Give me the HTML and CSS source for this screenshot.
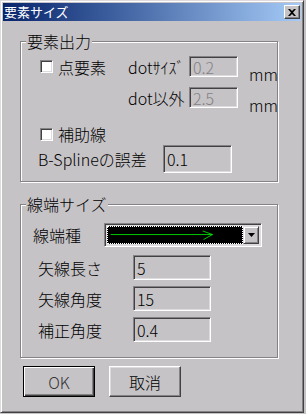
FILE: index.html
```html
<!DOCTYPE html>
<html lang="ja">
<head>
  <meta charset="UTF-8">
  <title>要素サイズ</title>
  <link rel="stylesheet" href="styles.css">
</head>
<body>
  <div class="window">
    <div class="titlebar">
      <span class="title">要素サイズ</span>
      <button class="close">
        <svg width="8" height="7" viewBox="0 0 8 7"><path d="M0 0h2l2 2 2-2h2L5 3.5 8 7H6L4 5 2 7H0l3-3.5z" fill="#000"/></svg>
      </button>
    </div>

    <div class="content">
      <fieldset class="group">
        <legend>要素出力</legend>
        <div class="rows rows-out">
          <div class="grid-dot">
            <label class="check"><span class="box"></span><span>点要素</span></label>
            <span class="lbl">dotｻｲｽﾞ</span>
            <span class="field field-dot disabled">0.2</span>
            <span class="unit">mm</span>

            <span></span>
            <span class="lbl">dot以外</span>
            <span class="field field-dot disabled">2.5</span>
            <span class="unit">mm</span>
          </div>

          <label class="check check-aux"><span class="box"></span><span>補助線</span></label>

          <div class="row row-spline">
            <span class="lbl lbl-spline">B-Splineの誤差</span>
            <span class="field field-spline">0.1</span>
          </div>
        </div>
      </fieldset>

      <fieldset class="group group-end">
        <legend>線端サイズ</legend>
        <div class="rows rows-end">
          <div class="row">
            <span class="lbl lbl-kind">線端種</span>
            <div class="combo">
              <div class="combo-value">
                <svg width="150" height="18" viewBox="0 0 150 18">
                  <path d="M3 8.5H117M106 4.5L117 8.5L107 14" stroke="#00e000" stroke-width="1" fill="none"/>
                </svg>
              </div>
              <span class="combo-btn">
                <svg width="7" height="4" viewBox="0 0 7 4"><path d="M0 0h7L3.5 4z" fill="#000"/></svg>
              </span>
            </div>
          </div>
          <div class="row row-num">
            <span class="lbl lbl-num">矢線長さ</span>
            <span class="field field-num">5</span>
          </div>
          <div class="row row-num">
            <span class="lbl lbl-num">矢線角度</span>
            <span class="field field-num">15</span>
          </div>
          <div class="row row-num">
            <span class="lbl lbl-num">補正角度</span>
            <span class="field field-num">0.4</span>
          </div>
        </div>
      </fieldset>

      <div class="buttons">
        <button class="btn btn-default">OK</button>
        <button class="btn">取消</button>
      </div>
    </div>
  </div>
</body>
</html>
```

FILE: styles.css
```css
html, body {
  margin: 0;
  padding: 0;
}

body {
  width: 306px;
  height: 414px;
  background: #c6c3c6;
  font-family: "Noto Sans CJK JP", sans-serif;
  font-size: 16px;
  font-weight: 300;
  color: #000;
}

.window {
  width: 304px;
  height: 413px;
  box-sizing: border-box;
  padding: 2px;
  border: 1px solid;
  border-color: #dedbde #424142 #424142 #dedbde;
  box-shadow: inset 1px 1px #fff, inset -1px -1px #848284;
  background: #c6c3c6;
}

/* タイトルバー */
.titlebar {
  height: 18px;
  display: flex;
  align-items: center;
  justify-content: space-between;
  padding: 0 1px 0 1px;
  background: linear-gradient(to right, #08246b 0%, #3a5c9c 35%, #a5cbf7 100%);
  color: #fff;
}

.title {
  font-size: 13px;
  font-weight: 400;
  line-height: 18px;
}

.close {
  width: 16px;
  height: 14px;
  padding: 0;
  margin: 0;
  display: flex;
  align-items: center;
  justify-content: center;
  background: #c6c3c6;
  border: 1px solid;
  border-color: #fff #424142 #424142 #fff;
  box-shadow: inset -1px -1px #848284;
}

.content {
  padding: 11px 0 0 17px;
}

/* グループ枠 */
.group {
  margin: 0;
  padding: 0;
  width: 258px;
  box-sizing: border-box;
  min-inline-size: 0;
  border: 1px solid #848284;
  box-shadow: inset 1px 1px #fff, 1px 1px #fff;
}

.group legend {
  margin-left: 5px;
  padding: 0 1px;
  line-height: 19px;
  background: #c6c3c6;
}

.group-end {
  margin-top: 13px;
}

.rows-out {
  padding: 5px 0 8px 17px;
}

.rows-end {
  padding: 9px 0 15px 12px;
}

.grid-dot {
  display: grid;
  grid-template-columns: 90px 61px 49px auto;
  grid-auto-rows: 21px;
  row-gap: 10px;
  align-items: center;
}

.row {
  display: flex;
  align-items: center;
}

.lbl {
  line-height: 16px;
  white-space: nowrap;
}

.unit {
  margin-left: 11px;
  align-self: end;
  line-height: 16px;
  margin-bottom: -5px;
}

/* チェックボックス */
.check {
  display: flex;
  align-items: center;
  line-height: 16px;
}

.box {
  width: 13px;
  height: 13px;
  flex-shrink: 0;
  box-sizing: border-box;
  margin: 0 5px 0 2px;
  background: #fff;
  border: 1px solid;
  border-color: #848284 #fff #fff #848284;
  box-shadow: inset 1px 1px #424142, inset -1px -1px #dedbde;
}

.check-aux {
  margin-top: 18px;
  height: 16px;
}

.row-spline {
  margin-top: 3px;
}

.lbl-spline {
  width: 125px;
}

/* 入力欄 */
.field {
  box-sizing: border-box;
  flex-shrink: 0;
  display: flex;
  align-items: center;
  padding-left: 3px;
  line-height: 16px;
  border: 1px solid;
  border-color: #848284 #fff #fff #848284;
  box-shadow: inset 1px 1px #424142, inset -1px -1px #dedbde;
}

.field-dot {
  width: 49px;
  height: 21px;
}

.disabled {
  color: #848284;
}

.field-spline {
  width: 69px;
  height: 28px;
}

.lbl-kind {
  width: 71px;
}

.combo {
  width: 158px;
  height: 24px;
  box-sizing: border-box;
  display: flex;
  padding: 2px;
  border: 1px solid;
  border-color: #848284 #fff #fff #848284;
  box-shadow: inset 1px 1px #424142, inset -1px -1px #dedbde;
  background: #dedbde;
}

.combo-value {
  flex: 1;
  min-width: 0;
  overflow: hidden;
  background: #000;
  border: 1px dotted #fff;
  display: flex;
  align-items: center;
}

.combo-btn {
  width: 16px;
  flex-shrink: 0;
  box-sizing: border-box;
  display: flex;
  align-items: center;
  justify-content: center;
  background: #c6c3c6;
  border: 1px solid;
  border-color: #dedbde #424142 #424142 #dedbde;
  box-shadow: inset 1px 1px #fff, inset -1px -1px #848284;
}

.row-num {
  margin-top: 8px;
}

.row-num + .row-num {
  margin-top: 6px;
}

.lbl-num {
  width: 95px;
  padding-left: 5px;
}

.field-num {
  width: 78px;
  height: 25px;
}

/* ボタン */
.buttons {
  display: flex;
  gap: 14px;
  margin: 8px 0 0 3px;
}

.btn {
  width: 72px;
  height: 31px;
  box-sizing: border-box;
  padding: 0;
  font-family: "Noto Sans CJK JP", sans-serif;
  font-size: 16px;
  font-weight: 300;
  color: #000;
  background: #c6c3c6;
  border: 1px solid;
  border-color: #fff #424142 #424142 #fff;
  box-shadow: inset -1px -1px #848284, inset 1px 1px #dedbde;
}

.btn-default {
  border: 1px solid #000;
  box-shadow: inset 1px 1px #fff, inset -1px -1px #424142, inset -2px -2px #848284;
  color: #333;
}
```
